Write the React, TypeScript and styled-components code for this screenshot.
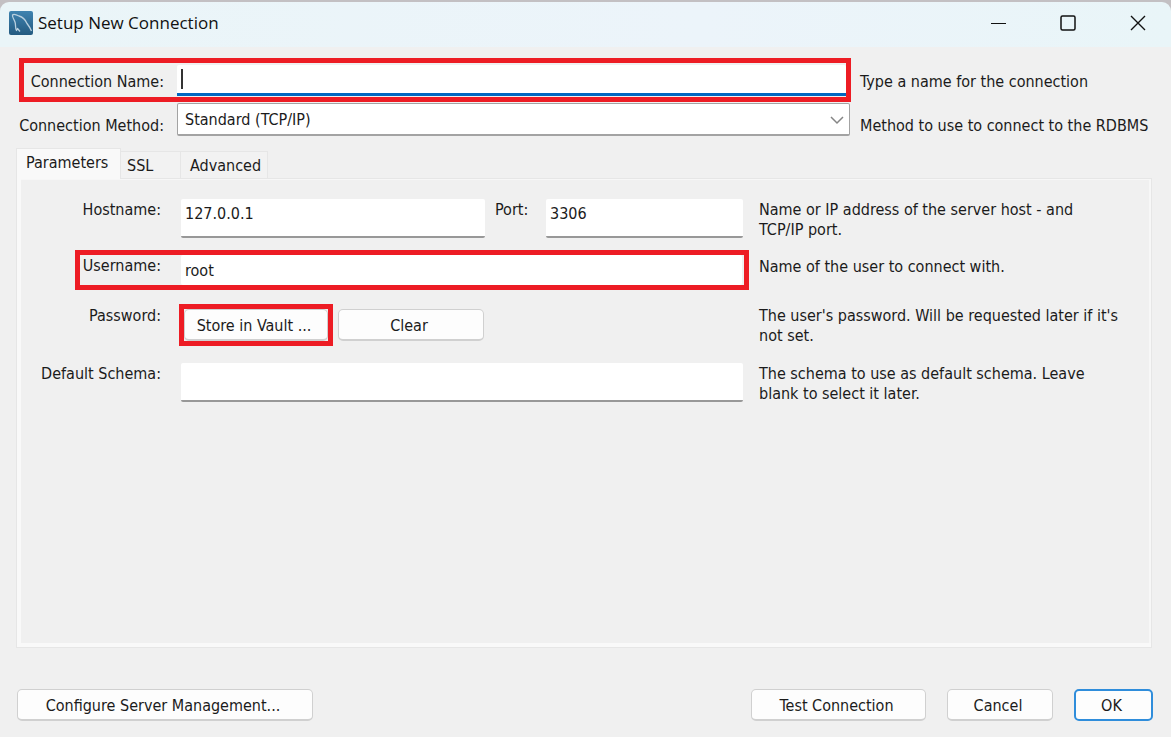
import React from "react";
import styled, { createGlobalStyle, css } from "styled-components";

const GlobalStyle = createGlobalStyle`
  *, *::before, *::after { box-sizing: border-box; }
  body {
    margin: 0;
    background: #c3c0c3;
    color: #1b1b1b;
    font: 16px/20px "DejaVu Sans Condensed", "Noto Sans", sans-serif;
  }
  input, select, button { font: inherit; color: inherit; }
`;

const red = "#ed1c24";

const Dialog = styled.main`
  display: flex;
  flex-direction: column;
  min-height: 100vh;
  padding-top: 2px;
`;

const TitleBar = styled.header`
  display: flex;
  align-items: center;
  height: 45px;
  padding: 0 10px 4px 9px;
  border-radius: 9px 9px 0 0;
  background: linear-gradient(90deg, #eaf5f8, #ecf4fa 60%, #e9f5f8);
`;

const Title = styled.h1`
  flex: 1;
  margin: 0 0 0 5px;
  color: #111;
  font: 400 17px/24px "Open Sans", "Noto Sans", sans-serif;
`;

const WindowButton = styled.button`
  display: grid;
  place-items: center;
  width: 46px;
  height: 40px;
  margin-left: 24px;
  padding: 0;
  border: 0;
  background: transparent;
`;

const Content = styled.form`
  display: flex;
  flex: 1;
  flex-direction: column;
  padding: 11px 18px 16px 16px;
  background: #f0f0f0;
`;

const marked = css`
  border: 5px solid ${red};
`;

const TopRow = styled.div`
  display: flex;
  align-items: center;
  gap: 9px;
  padding-left: 3px;
`;

const TopMain = styled.div<{ $marked?: boolean }>`
  display: flex;
  flex: 1;
  align-items: center;
  gap: 13px;
  height: ${(p) => (p.$marked ? 44 : 34)}px;
  ${(p) => (p.$marked ? marked : "padding-right: 1px;")}
`;

const TopLabel = styled.label<{ $inset?: boolean }>`
  width: ${(p) => (p.$inset ? 140 : 145)}px;
  padding-top: ${(p) => (p.$inset ? 4 : 14)}px;
  text-align: right;
  white-space: nowrap;
`;

const TopHelp = styled.p<{ $low?: boolean }>`
  flex-shrink: 0;
  width: 293px;
  margin: 0;
  padding-top: ${(p) => (p.$low ? 14 : 4)}px;
  white-space: nowrap;
`;

const FocusField = styled.div`
  position: relative;
  flex: 1;
  height: 31px;
`;

const FocusInput = styled.input`
  display: block;
  width: 100%;
  height: 31px;
  padding: 0 4px;
  border: 0;
  border-bottom: 3px solid #0067c0;
  border-radius: 2px 2px 0 0;
  background: #fff;
  outline: 0;
`;

const Caret = styled.span`
  position: absolute;
  top: 4px;
  left: 4px;
  width: 2px;
  height: 20px;
  background: #333;
`;

const SelectField = styled.div`
  position: relative;
  flex: 1;
`;

const Select = styled.select`
  display: block;
  width: 100%;
  height: 33px;
  padding: 2px 6px 0 7px;
  border: 1px solid #a3a3a3;
  border-bottom-width: 2px;
  border-radius: 2px;
  background: #fff;
  appearance: none;
`;

const Chevron = styled.svg`
  position: absolute;
  top: 12px;
  right: 6px;
  pointer-events: none;
`;

const Tabs = styled.div`
  display: flex;
  align-items: flex-end;
  margin-top: 12px;
`;

const Tab = styled.button<{ $active?: boolean; $width: number }>`
  width: ${(p) => p.$width}px;
  height: 27px;
  padding: 2px 0 0 6px;
  border: 1px solid #e6e6e6;
  border-bottom: 0;
  background: #f2f2f2;
  text-align: left;

  & + & { border-left: 0; }
  &:last-child { padding-left: 9px; }

  ${(p) =>
    p.$active &&
    css`
      z-index: 1;
      height: 31px;
      margin-bottom: -1px;
      padding: 0 0 2px 9px;
      background: #f9f9f9;
    `}
`;

const Panel = styled.section`
  display: flex;
  flex: 1;
  flex-direction: column;
  gap: 10px;
  margin-right: 1px;
  padding-top: 20px;
  border: 1px solid #e6e6e6;
  box-shadow: inset 4px 0 #f9f9f9, inset 0 -4px #f9f9f9, inset 0 1px #f7f7f7, inset -2px 0 #f7f7f7;
`;

const Row = styled.div`
  display: flex;
  padding-left: 4px;
`;

const PasswordRow = styled(Row)`
  padding-top: 4px;
  padding-bottom: 7px;
`;

const Main = styled.div<{ $marked?: boolean }>`
  display: flex;
  flex: 1;
  gap: 20px;
  min-height: 38px;
  padding-right: 6px;
  ${(p) =>
    p.$marked &&
    css`
      ${marked}
      height: 40px;
      margin-left: 54px;
      padding-right: 2px;
    `}
`;

const Label = styled.label<{ $inset?: boolean; $offset?: number }>`
  width: ${(p) => (p.$inset ? 81 : 140)}px;
  padding-top: ${(p) => p.$offset ?? 1}px;
  text-align: right;
  white-space: nowrap;
`;

const Help = styled.p<{ $offset?: number }>`
  flex-shrink: 0;
  width: 402px;
  margin: 0;
  padding: ${(p) => p.$offset ?? 1}px 31px 0 10px;
`;

const Input = styled.input<{ $flat?: boolean }>`
  flex: 1;
  min-width: 0;
  height: ${(p) => (p.$flat ? 30 : 39)}px;
  padding: 0 4px ${(p) => (p.$flat ? 0 : 8)}px;
  border: 0;
  border-bottom: ${(p) => (p.$flat ? "0" : "2px solid #989898")};
  border-radius: 2px;
  background: #fff;
`;

const HostFields = styled.div`
  display: grid;
  flex: 1;
  grid-template-columns: minmax(0, 304fr) 61px minmax(0, 197fr);
`;

const PortLabel = styled.label`
  padding: 1px 0 0 10px;
`;

const Actions = styled.div`
  display: flex;
  flex: 1;
  align-items: flex-start;
  gap: 5px;
  margin-left: -2px;
`;

const Mark = styled.div`
  ${marked}
`;

const Button = styled.button<{ $width: number; $primary?: boolean }>`
  width: ${(p) => p.$width}px;
  height: 32px;
  padding: ${(p) => (p.$primary ? 1 : 2)}px 4px 0 0;
  border: ${(p) => (p.$primary ? "2px solid #2f8ddb" : "1px solid #d0d0d0")};
  border-bottom-width: 2px;
  border-radius: 5px;
  background: #fdfdfd;
`;

const PasswordButton = styled(Button)`
  align-self: center;
`;

const Footer = styled.footer`
  display: flex;
  gap: 21px;
  margin-top: 41px;
  padding-left: 1px;
`;

const Spacer = styled.div`
  flex: 1;
`;

function AppIcon() {
  return (
    <svg width="24" height="24" viewBox="0 0 24 24" aria-hidden="true">
      <defs>
        <linearGradient id="tile" x1="0" y1="0" x2="0" y2="1">
          <stop offset="0" stopColor="#3f83b0" />
          <stop offset="1" stopColor="#245a80" />
        </linearGradient>
      </defs>
      <rect width="24" height="24" rx="2" fill="url(#tile)" />
      <path
        d="M11 20.500 L8.500 17.500 L7.500 19.500 C6 17 7 14 6 11 C5 8 3 6 3.500 4 C5 2.500 8 4 10 5 C14 6 16.500 9 18 12.500 C19.500 14.500 21.500 17 22.500 20"
        fill="none" stroke="#b9d0df" strokeWidth="1.300" strokeLinejoin="round"
      />
    </svg>
  );
}

export default function App() {
  return (
    <>
      <GlobalStyle />
      <Dialog>
        <TitleBar>
          <AppIcon />
          <Title>Setup New Connection</Title>
          <WindowButton aria-label="Minimize">
            <svg width="16" height="16"><path d="M1 8.500H16" stroke="#111" /></svg>
          </WindowButton>
          <WindowButton aria-label="Maximize">
            <svg width="16" height="16">
              <rect x="1" y="1" width="14" height="14" rx="1.500" fill="none" stroke="#111" strokeWidth="1.500" />
            </svg>
          </WindowButton>
          <WindowButton aria-label="Close">
            <svg width="16" height="16"><path d="M1 1L15 15M15 1L1 15" stroke="#111" strokeWidth="1.400" /></svg>
          </WindowButton>
        </TitleBar>
        <Content onSubmit={(e) => e.preventDefault()}>
          <TopRow>
            <TopMain $marked>
              <TopLabel $inset htmlFor="name">Connection Name:</TopLabel>
              <FocusField>
                <FocusInput id="name" type="text" />
                <Caret />
              </FocusField>
            </TopMain>
            <TopHelp>Type a name for the connection</TopHelp>
          </TopRow>
          <TopRow>
            <TopMain>
              <TopLabel htmlFor="method">Connection Method:</TopLabel>
              <SelectField>
                <Select id="method">
                  <option>Standard (TCP/IP)</option>
                </Select>
                <Chevron width="14" height="10">
                  <path d="M1 2L7 8L13 2" fill="none" stroke="#858585" strokeWidth="1.500" />
                </Chevron>
              </SelectField>
            </TopMain>
            <TopHelp $low>Method to use to connect to the RDBMS</TopHelp>
          </TopRow>

          <Tabs role="tablist">
            <Tab type="button" role="tab" aria-selected="true" $active $width={105}>Parameters</Tab>
            <Tab type="button" role="tab" $width={60}>SSL</Tab>
            <Tab type="button" role="tab" $width={87}>Advanced</Tab>
          </Tabs>
          <Panel role="tabpanel">
            <Row>
              <Main>
                <Label htmlFor="host">Hostname:</Label>
                <HostFields>
                  <Input id="host" type="text" defaultValue="127.0.0.1" />
                  <PortLabel htmlFor="port">Port:</PortLabel>
                  <Input id="port" type="text" defaultValue="3306" />
                </HostFields>
              </Main>
              <Help>Name or IP address of the server host - and TCP/IP port.</Help>
            </Row>
            <Row>
              <Main $marked>
                <Label $inset htmlFor="user">Username:</Label>
                <Input $flat id="user" type="text" defaultValue="root" />
              </Main>
              <Help $offset={7}>Name of the user to connect with.</Help>
            </Row>
            <PasswordRow>
              <Main>
                <Label as="span" $offset={2}>Password:</Label>
                <Actions>
                  <Mark><Button type="button" $width={144}>Store in Vault ...</Button></Mark>
                  <PasswordButton type="button" $width={146}>Clear</PasswordButton>
                </Actions>
              </Main>
              <Help $offset={2}>The user's password. Will be requested later if it's not set.</Help>
            </PasswordRow>
            <Row>
              <Main>
                <Label htmlFor="schema">Default Schema:</Label>
                <Input id="schema" type="text" />
              </Main>
              <Help>The schema to use as default schema. Leave blank to select it later.</Help>
            </Row>
          </Panel>
          <Footer>
            <Button type="button" $width={296}>Configure Server Management...</Button>
            <Spacer />
            <Button type="button" $width={175}>Test Connection</Button>
            <Button type="button" $width={106}>Cancel</Button>
            <Button type="submit" $width={79} $primary>OK</Button>
          </Footer>
        </Content>
      </Dialog>
    </>
  );
}
